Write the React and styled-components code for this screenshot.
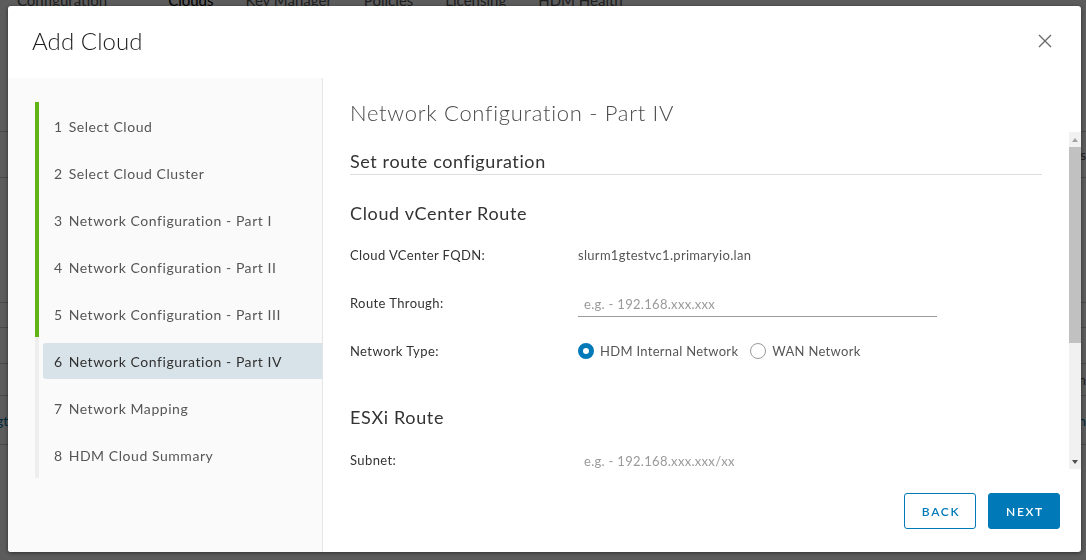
import React from 'react';
import styled, { createGlobalStyle } from 'styled-components';

const GlobalStyle = createGlobalStyle`
  html, body {
    margin: 0;
    padding: 0;
    height: 100%;
  }
  body {
    font-family: 'Lato', 'Noto Sans', sans-serif;
    background: #fff;
    overflow: hidden;
  }
  * {
    box-sizing: border-box;
  }
`;

/* ---------- page behind the dialog ---------- */

const Page = styled.div`
  height: 560px;
  overflow: hidden;
  color: #565656;
`;

const Tabs = styled.nav`
  display: flex;
  gap: 32px;
  margin-top: -10px;
  padding-left: 17px;
  height: 20px;
  font-size: 15px;
  line-height: 20px;
`;

const Tab = styled.span`
  color: ${p => (p.active ? '#000' : '#565656')};
  margin-right: ${p => (p.wide ? '29px' : '0')};
`;

const Table = styled.div`
  margin-top: 121px;
  border-top: 1px solid #ccc;
`;

const TableRow = styled.div`
  display: flex;
  justify-content: space-between;
  align-items: center;
  height: ${p => p.h}px;
  border-bottom: 1px solid #ccc;
  font-size: 14px;
  color: ${p => (p.link ? '#0072a3' : '#565656')};
`;

const CutCell = styled.span`
  margin-left: -46px;
`;

/* ---------- dialog ---------- */

const Overlay = styled.div`
  position: fixed;
  inset: 0;
  background: rgba(0, 0, 0, 0.64);
`;

const Modal = styled.div`
  position: fixed;
  left: 8px;
  top: 6px;
  width: 1073px;
  height: 546px;
  background: #fff;
  border-radius: 3px;
  box-shadow: 0 1px 4px rgba(0, 0, 0, 0.5);
  display: flex;
  flex-direction: column;
  overflow: hidden;
`;

const Header = styled.header`
  height: 72px;
  flex: none;
  display: flex;
  align-items: center;
  justify-content: space-between;
  padding: 0 29px 0 24px;
`;

const Title = styled.h3`
  margin: 0;
  font-size: 24px;
  font-weight: 300;
  color: #1a1a1a;
  line-height: 30px;
  padding-bottom: 3px;
  letter-spacing: 0.1px;
`;

const CloseButton = styled.button`
  width: 14px;
  height: 14px;
  padding: 0;
  border: none;
  background: none;
  display: flex;
  margin-bottom: 2px;
`;

const Body = styled.div`
  flex: 1;
  display: flex;
  min-height: 0;
`;

const Sidebar = styled.aside`
  width: 315px;
  flex: none;
  background: #fafafa;
  border-right: 1px solid #e6e6e6;
  padding: 24px 0 0 27px;
`;

const Step = styled.div`
  height: 47px;
  padding: 6px 0 0 4px;
  border-left: 4px solid ${p => (p.done ? '#60b515' : '#eeeeee')};
`;

const StepButton = styled.div`
  height: 36px;
  display: flex;
  align-items: center;
  padding-left: 11px;
  font-size: 14px;
  letter-spacing: 0.55px;
  color: ${p => (p.active ? '#313131' : '#565656')};
  background: ${p => (p.active ? '#d8e3e9' : 'transparent')};
  border-radius: 3px 0 0 3px;
  white-space: nowrap;
`;

const StepNum = styled.span`
  margin-right: 6px;
`;

const Main = styled.section`
  flex: 1;
  display: flex;
  flex-direction: column;
  min-width: 0;
`;

const PageTitle = styled.h2`
  margin: 0;
  padding: 21px 27px 5px 27px;
  font-size: 22px;
  line-height: 28px;
  font-weight: 300;
  letter-spacing: 0.7px;
  color: #4a4a4a;
`;

const ScrollArea = styled.div`
  height: 337px;
  flex: none;
  display: flex;
`;

const ScrollContent = styled.div`
  flex: 1;
  min-width: 0;
  overflow: hidden;
  padding: 17px 27px 0 27px;
`;

const ScrollBar = styled.div`
  width: 12px;
  flex: none;
  display: flex;
  flex-direction: column;
  background: #f1f1f1;
`;

const ScrollArrow = styled.div`
  height: 15px;
  flex: none;
  display: flex;
  align-items: center;
  justify-content: center;

  &::before {
    content: '';
    width: 0;
    height: 0;
    border-left: 3.5px solid transparent;
    border-right: 3.5px solid transparent;
    ${p =>
      p.down
        ? 'border-top: 4px solid #505050;'
        : 'border-bottom: 4px solid #a3a3a3;'}
  }
`;

const ScrollThumb = styled.div`
  height: 196px;
  flex: none;
  background: #c1c1c1;
`;

const ScrollRest = styled.div`
  flex: 1;
`;

const SectionTitle = styled.h3`
  margin: 0 0 26px 0;
  padding-bottom: 1px;
  font-size: 18px;
  line-height: 24px;
  font-weight: 400;
  letter-spacing: 0.6px;
  color: #333;
  border-bottom: 1px solid #dddddd;
`;

const GroupTitle = styled.h4`
  margin: ${p => (p.spaced ? '30px' : '0')} 0 ${p => (p.spaced ? '7px' : '6px')} 0;
  font-size: 18px;
  line-height: 24px;
  font-weight: 400;
  letter-spacing: 0.65px;
  color: #333;
`;

const FormRow = styled.div`
  height: 48px;
  display: flex;
  align-items: center;
`;

const Label = styled.label`
  width: 228px;
  flex: none;
  font-size: 13px;
  letter-spacing: 0.4px;
  color: #333;
`;

const Value = styled.span`
  font-size: 13px;
  letter-spacing: 0.3px;
  color: #565656;
`;

const TextInput = styled.input`
  width: 359px;
  height: 26px;
  margin-top: 2px;
  padding: 0 6px;
  border: none;
  border-bottom: 1px solid #9a9a9a;
  font-family: inherit;
  font-size: 13px;
  letter-spacing: 0.3px;
  color: #333;
  background: transparent;
  outline: none;

  &::placeholder {
    color: #9a9a9a;
  }
`;

const RadioGroup = styled.div`
  display: flex;
  align-items: center;
  gap: 12px;
`;

const RadioOption = styled.label`
  display: flex;
  align-items: center;
  gap: 6px;
  font-size: 13px;
  letter-spacing: 0.3px;
  color: #565656;
`;

const RadioDot = styled.span`
  width: 16px;
  height: 16px;
  border-radius: 50%;
  background: #fff;
  border: ${p => (p.checked ? '5px solid #0079b8' : '1px solid #9a9a9a')};
`;

const Footer = styled.footer`
  flex: 1;
  display: flex;
  justify-content: flex-end;
  align-items: flex-start;
  gap: 12px;
  padding: 24px 21px 0 0;
`;

const Button = styled.button`
  width: 72px;
  height: 36px;
  border-radius: 3px;
  border: 1px solid #0079b8;
  background: ${p => (p.primary ? '#0079b8' : '#fff')};
  color: ${p => (p.primary ? '#fff' : '#0079b8')};
  font-family: inherit;
  font-size: 12px;
  font-weight: 600;
  letter-spacing: 0.14em;
  padding: 0 0 0 2px;
`;

const steps = [
  'Select Cloud',
  'Select Cloud Cluster',
  'Network Configuration - Part I',
  'Network Configuration - Part II',
  'Network Configuration - Part III',
  'Network Configuration - Part IV',
  'Network Mapping',
  'HDM Cloud Summary',
];

const NetworkType = () => (
  <RadioGroup>
    <RadioOption>
      <RadioDot checked />
      HDM Internal Network
    </RadioOption>
    <RadioOption>
      <RadioDot />
      WAN Network
    </RadioOption>
  </RadioGroup>
);

const App = () => {
  return (
    <>
      <GlobalStyle />
      <Page>
        <Tabs>
          <Tab wide>Configuration</Tab>
          <Tab active>Clouds</Tab>
          <Tab>Key Manager</Tab>
          <Tab>Policies</Tab>
          <Tab>Licensing</Tab>
          <Tab>HDM Health</Tab>
        </Tabs>
        <Table>
          <TableRow h={46}><span /><span>Status</span></TableRow>
          <TableRow h={125}><span /><span /></TableRow>
          <TableRow h={25}><span /><span /></TableRow>
          <TableRow h={36}><span /><span /></TableRow>
          <TableRow h={32}><span /><span>Vm</span></TableRow>
          <TableRow h={49} link><CutCell>slurm1gt</CutCell><span>On</span></TableRow>
        </Table>
      </Page>

      <Overlay>
        <Modal>
          <Header>
            <Title>Add Cloud</Title>
            <CloseButton aria-label="Close">
              <svg width="14" height="14" viewBox="0 0 14 14">
                <path d="M1 1 L13 13 M13 1 L1 13" stroke="#6a6a6a" strokeWidth="1.4" fill="none" />
              </svg>
            </CloseButton>
          </Header>
          <Body>
            <Sidebar>
              {steps.map((s, i) => (
                <Step key={s} done={i < 5}>
                  <StepButton active={i === 5}>
                    <StepNum>{i + 1}</StepNum>
                    {s}
                  </StepButton>
                </Step>
              ))}
            </Sidebar>
            <Main>
              <PageTitle>Network Configuration - Part IV</PageTitle>
              <ScrollArea>
                <ScrollContent>
                  <SectionTitle>Set route configuration</SectionTitle>
                  <GroupTitle>Cloud vCenter Route</GroupTitle>
                  <FormRow>
                    <Label>Cloud VCenter FQDN:</Label>
                    <Value>slurm1gtestvc1.primaryio.lan</Value>
                  </FormRow>
                  <FormRow>
                    <Label>Route Through:</Label>
                    <TextInput placeholder="e.g. - 192.168.xxx.xxx" />
                  </FormRow>
                  <FormRow>
                    <Label>Network Type:</Label>
                    <NetworkType />
                  </FormRow>
                  <GroupTitle spaced>ESXi Route</GroupTitle>
                  <FormRow>
                    <Label>Subnet:</Label>
                    <TextInput placeholder="e.g. - 192.168.xxx.xxx/xx" />
                  </FormRow>
                  <FormRow>
                    <Label>Route Through:</Label>
                    <TextInput placeholder="e.g. - 192.168.xxx.xxx" />
                  </FormRow>
                  <FormRow>
                    <Label>Network Type:</Label>
                    <NetworkType />
                  </FormRow>
                </ScrollContent>
                <ScrollBar>
                  <ScrollArrow />
                  <ScrollThumb />
                  <ScrollRest />
                  <ScrollArrow down />
                </ScrollBar>
              </ScrollArea>
              <Footer>
                <Button>BACK</Button>
                <Button primary>NEXT</Button>
              </Footer>
            </Main>
          </Body>
        </Modal>
      </Overlay>
    </>
  );
};

export default App;
